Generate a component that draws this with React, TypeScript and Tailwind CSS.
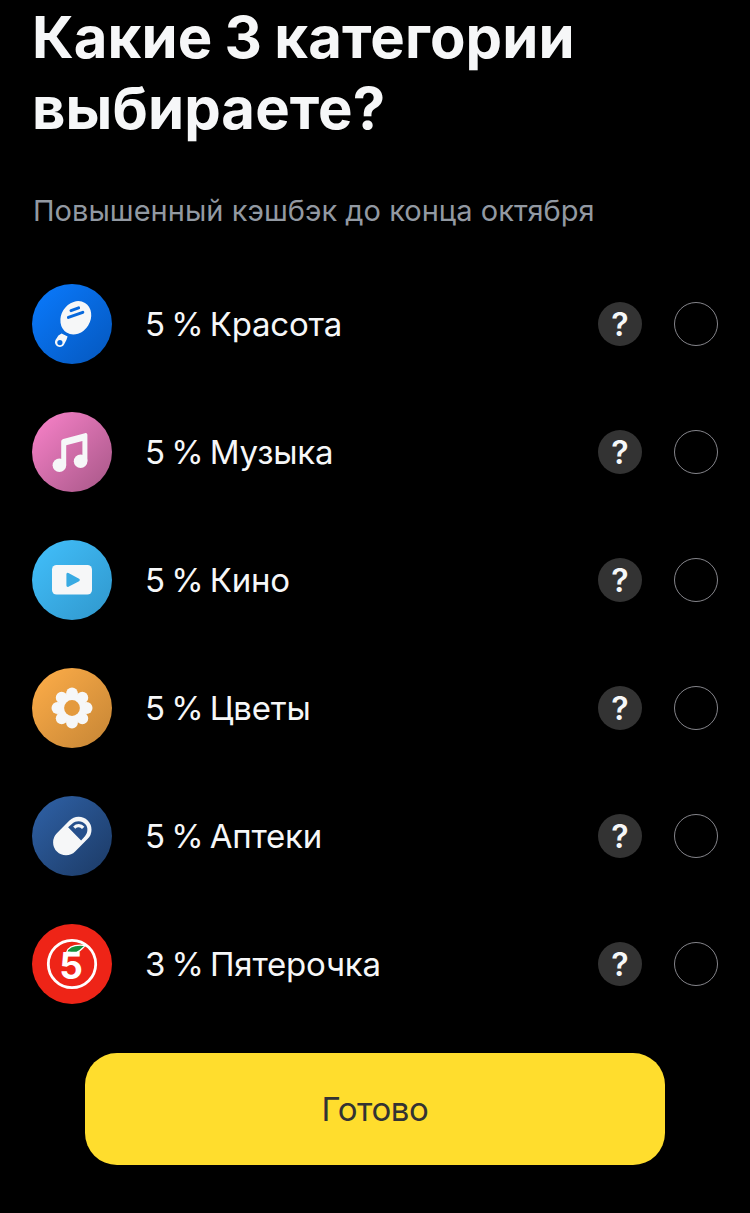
import { useState } from 'react'
import type { ReactNode } from 'react'
import { clsx } from 'clsx'

type Category = {
  id: string
  percent: number
  name: string
  badge: string
  icon: ReactNode
}

function MirrorIcon() {
  return (
    <svg viewBox="0 0 80 80" className="size-20" fill="#f6f7f8">
      <ellipse cx="43.8" cy="33.8" rx="14.6" ry="17.4" transform="rotate(32 43.8 33.8)" />
      <path d="M39 26.6l7.6-2.7M36.4 33.4l14.4-5.1" stroke="#0768dc" strokeWidth="3" strokeLinecap="round" />
      <path
        fillRule="evenodd"
        d="M29.6 49.6l6 3-1.2 3.3-2.2 4.3c-1.3 2.5-4 3.4-6.4 2.3-2.5-1.2-3.5-4-2.3-6.5l2.9-4.4zM27.9 56a2.6 2.6 0 1 0 0 5.2 2.6 2.6 0 0 0 0-5.2z"
      />
    </svg>
  )
}

function MusicIcon() {
  return (
    <svg viewBox="0 0 80 80" className="size-20" fill="#f6f7f8">
      <circle cx="27.4" cy="53.2" r="6.8" />
      <circle cx="48.6" cy="49.2" r="6.8" />
      <path d="M29.2 53V29.6c0-1.5.7-2.3 2.1-2.7l21.6-5.7c1.6-.4 2.5.3 2.5 1.9V49h-5V28.9l-16.2 4.3V53z" />
    </svg>
  )
}

function CinemaIcon() {
  return (
    <svg viewBox="0 0 80 80" className="size-20">
      <rect x="20" y="25" width="40" height="29.5" rx="4.6" fill="#f6f7f8" />
      <path d="M35.8 34.2v11.4l10.6-5.7z" fill="#39abe3" stroke="#39abe3" strokeWidth="2.8" strokeLinejoin="round" />
    </svg>
  )
}

function FlowerIcon() {
  return (
    <svg viewBox="0 0 80 80" className="size-20" fill="#f6f7f8">
      <circle cx="40" cy="40" r="14.5" />
      {[0, 45, 90, 135, 180, 225, 270, 315].map((angle) => (
        <circle key={angle} cx="40" cy="25.4" r="5.9" transform={`rotate(${angle} 40 40)`} />
      ))}
      <circle cx="40" cy="40" r="7.9" fill="#e49a3d" />
    </svg>
  )
}

function PillIcon() {
  return (
    <svg viewBox="0 0 80 80" className="size-20" fill="none">
      <path d="M34 46.4L46.6 33.7" stroke="#f6f7f8" strokeWidth="25.8" strokeLinecap="round" />
      <path d="M36.1 31.2l13 13.2 3.6-4c3.3-3.6 3.7-8.9.7-12.2-3.4-3.7-9.5-3.8-13-.7z" fill="#26508c" />
      <path d="M42.2 31.6c2.8-2.6 6.5-2.6 9 .3" stroke="#f6f7f8" strokeWidth="3.2" />
    </svg>
  )
}

function PyaterochkaIcon() {
  return (
    <svg viewBox="0 0 80 80" className="size-20">
      <circle cx="40" cy="40" r="23.7" fill="none" stroke="#fff" strokeWidth="2.8" />
      <text x="39.2" y="54.6" textAnchor="middle" fill="#fff" className="font-['Inter',sans-serif] text-[37px] font-bold">
        5
      </text>
      <path
        d="M34.6 28.4c1.6-5.8 8.1-8.2 19.2-6.9-3.4 1.6-4.7 5.9-9.2 6.8-3.9.8-6.8-.8-10 .1z"
        fill="#14923c"
        stroke="#fff"
        strokeWidth="1.3"
      />
    </svg>
  )
}

const categories: Category[] = [
  { id: 'beauty', percent: 5, name: 'Красота', badge: 'from-[#0a7bff] to-[#0557bd]', icon: <MirrorIcon /> },
  { id: 'music', percent: 5, name: 'Музыка', badge: 'from-[#fb83cb] to-[#a65787]', icon: <MusicIcon /> },
  { id: 'cinema', percent: 5, name: 'Кино', badge: 'from-[#42c0fc] to-[#3097cc]', icon: <CinemaIcon /> },
  { id: 'flowers', percent: 5, name: 'Цветы', badge: 'from-[#ffae49] to-[#c58535]', icon: <FlowerIcon /> },
  { id: 'pharmacy', percent: 5, name: 'Аптеки', badge: 'from-[#2f62a8] to-[#1c3a65]', icon: <PillIcon /> },
  { id: 'pyaterochka', percent: 3, name: 'Пятерочка', badge: 'from-[#ee2417] to-[#ee2417]', icon: <PyaterochkaIcon /> },
]

export default function App() {
  const [selected, setSelected] = useState<string[]>([])

  const toggle = (id: string) => {
    setSelected((prev) => {
      if (prev.includes(id)) return prev.filter((item) => item !== id)
      return prev.length < 3 ? [...prev, id] : prev
    })
  }

  return (
    <main className="flex h-[1213px] w-[750px] flex-col overflow-hidden bg-black px-8 font-['Inter',sans-serif] text-[#f6f7f8]">
      <h1 className="pt-0.5 text-[58px] font-bold leading-[71px] tracking-[0.1px] [word-spacing:-1.6px]">
        Какие 3 категории
        <br />
        выбираете?
      </h1>
      <p className="mt-[49px] pl-px text-[29px] leading-9 tracking-[0.03px] text-[#9299a2]">
        Повышенный кэшбэк до конца октября
      </p>

      <ul className="mt-[55px] flex flex-col gap-12">
        {categories.map((category) => (
          <li key={category.id} className="flex h-20 items-center">
            <span className={clsx('size-20 shrink-0 overflow-hidden rounded-full bg-linear-to-br', category.badge)}>
              {category.icon}
            </span>
            <span className="ml-8 flex-1 whitespace-nowrap pl-px text-[33px] leading-10 tracking-[-0.2px] [word-spacing:-2.8px]">
              {category.percent} % {category.name}
            </span>
            <button
              type="button"
              className="flex size-11 items-center justify-center rounded-full bg-[#333] pt-0.5 text-[32px] font-semibold leading-none"
            >
              ?
            </button>
            <button
              type="button"
              role="checkbox"
              aria-checked={selected.includes(category.id)}
              aria-label={category.name}
              onClick={() => toggle(category.id)}
              className={clsx(
                'ml-8 size-11 rounded-full border-[1.5px] border-[#85858b]',
                selected.includes(category.id) && 'bg-[#ffdd2d]',
              )}
            />
          </li>
        ))}
      </ul>

      <button
        type="button"
        className="mx-auto mt-[49px] h-28 w-[580px] shrink-0 rounded-[32px] bg-[#ffdd2d] pt-0.5 text-[33px] tracking-[-0.4px] text-[#333]"
      >
        Готово
      </button>
    </main>
  )
}
